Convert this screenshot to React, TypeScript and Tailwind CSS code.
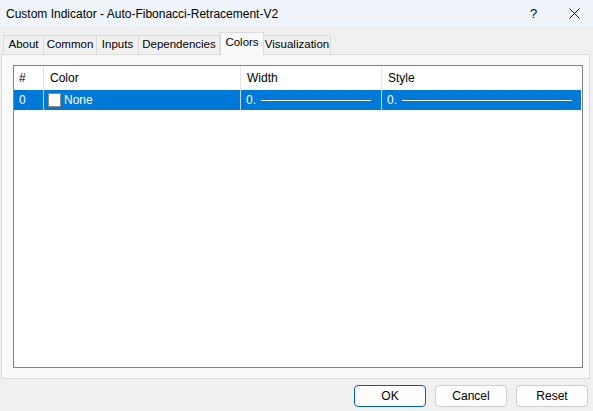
import React from 'react';

const TABS = [
  { label: 'About', w: 41 },
  { label: 'Common', w: 53 },
  { label: 'Inputs', w: 42 },
  { label: 'Dependencies', w: 81 },
  { label: 'Colors', w: 44, active: true },
  { label: 'Visualization', w: 67 },
];

function LineCell({ w }: { w: number }) {
  return (
    <div className="flex items-center h-full pl-[5px]">
      <span>0.</span>
      <span className="ml-[5px] h-px bg-white" style={{ width: w }} />
    </div>
  );
}

export default function App() {
  return (
    <div
      className="w-[593px] h-[411px] bg-[#f0f0f0] text-[12px] text-[#1a1a1a] flex flex-col overflow-hidden"
      style={{ fontFamily: '"Liberation Sans", Arial, sans-serif' }}
    >
      {/* title bar */}
      <div className="h-[27px] bg-[#eef4f9] flex items-center pl-[6px] shrink-0">
        <span className="text-[12px] text-black">Custom Indicator - Auto-Fibonacci-Retracement-V2</span>
        <span className="ml-auto w-[10px] text-[13px] text-black">?</span>
        <span className="ml-[28px] mr-[13px] w-[12px] h-[12px] flex items-center justify-center">
          <svg width="11" height="11" viewBox="0 0 11 11">
            <path d="M0.5 0.5 L10.5 10.5 M10.5 0.5 L0.5 10.5" stroke="#1a1a1a" strokeWidth="1" />
          </svg>
        </span>
      </div>

      {/* tabs */}
      <div className="flex items-end pl-[3px] mt-[5px] h-[22px] relative z-10 text-[11.5px]">
        {TABS.map((t, i) => (
          <div
            key={t.label}
            style={{ width: t.w }}
            className={
              t.active
                ? 'h-[23px] -mb-px bg-[#f9f9f9] border border-b-0 border-[#dadada] flex items-center justify-center pb-[3px] text-black'
                : i === 0
                ? 'h-[19px] bg-[#f0f0f0] border border-b-0 border-[#dadada] flex items-center justify-center text-black'
                : 'h-[19px] bg-[#f0f0f0] border-t border-r border-[#dadada] flex items-center justify-center text-black'
            }
          >
            {t.label}
          </div>
        ))}
      </div>

      {/* panel */}
      <div className="ml-[1px] w-[589px] h-[325px] bg-[#f9f9f9] border border-[#dcdcdc] pl-[11px] pt-[10px] pr-[6px] pb-[10px]">
        <div className="w-full h-full bg-white border border-[#838383] pr-px">
          <div className="flex h-[24px] text-black">
            <div className="w-[30px] pl-[5px] flex items-center border-r border-[#e5e5e5]">#</div>
            <div className="w-[197px] pl-[6px] flex items-center border-r border-[#e5e5e5]">Color</div>
            <div className="w-[141px] pl-[6px] flex items-center border-r border-[#e5e5e5]">Width</div>
            <div className="flex-1 pl-[6px] flex items-center">Style</div>
          </div>
          <div className="flex h-[20px] bg-[#0078d7] text-white">
            <div className="w-[30px] pl-[5px] flex items-center border-r border-[#b9d7f0]">0</div>
            <div className="w-[197px] pl-[4px] flex items-center border-r border-[#b9d7f0]">
              <span className="w-[13px] h-[14px] bg-white border border-[#8c8c8c]" />
              <span className="ml-[3px]">None</span>
            </div>
            <div className="w-[141px] border-r border-[#b9d7f0]">
              <LineCell w={110} />
            </div>
            <div className="flex-1">
              <LineCell w={170} />
            </div>
          </div>
        </div>
      </div>

      {/* buttons */}
      <div className="flex justify-end gap-[9px] pr-[5px] mt-[6px]">
        <button className="w-[72px] h-[22px] rounded-[4px] bg-[#fdfdfd] border border-[#005fb8] text-black">OK</button>
        <button className="w-[72px] h-[22px] rounded-[4px] bg-[#fdfdfd] border border-[#d0d0d0] text-black">Cancel</button>
        <button className="w-[72px] h-[22px] rounded-[4px] bg-[#fdfdfd] border border-[#d0d0d0] text-black">Reset</button>
      </div>
    </div>
  );
}
